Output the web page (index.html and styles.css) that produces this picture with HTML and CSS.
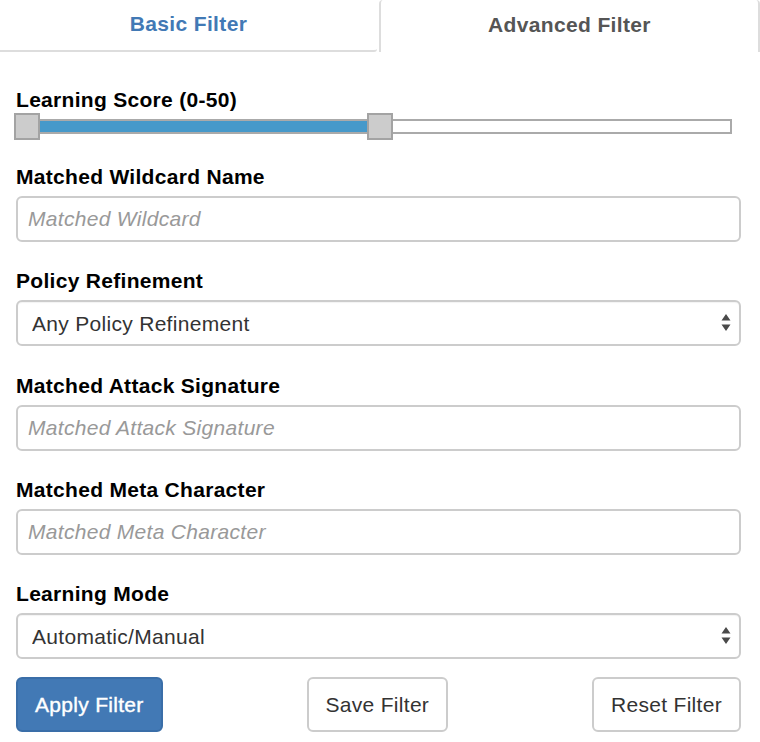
FILE: index.html
```html
<!DOCTYPE html>
<html>
<head>
<meta charset="utf-8">
<link rel="stylesheet" href="styles.css">
</head>
<body>
<div class="tabs">
  <div class="tab tab-basic">Basic Filter</div>
  <div class="tab tab-advanced">Advanced Filter</div>
</div>
<form class="panel">
  <div class="group group-slider">
    <label class="label">Learning Score (0-50)</label>
    <div class="slider">
      <div class="track">
        <div class="fill" style="left:22px;width:328px"></div>
        <div class="handle" style="left:-4px"></div>
        <div class="handle" style="left:349px"></div>
      </div>
    </div>
  </div>
  <div class="group">
    <label class="label">Matched Wildcard Name</label>
    <input class="control" type="text" placeholder="Matched Wildcard">
  </div>
  <div class="group group-wide">
    <label class="label">Policy Refinement</label>
    <div class="select-wrap">
      <select class="control select"><option>Any Policy Refinement</option></select>
      <svg class="arrows" width="10" height="17" viewBox="0 0 10 17"><path d="M5 0 L9.5 6.5 L0.5 6.5 Z M0.5 10.5 L9.5 10.5 L5 17 Z" fill="#4a4a4a"/></svg>
    </div>
  </div>
  <div class="group">
    <label class="label">Matched Attack Signature</label>
    <input class="control" type="text" placeholder="Matched Attack Signature">
  </div>
  <div class="group">
    <label class="label">Matched Meta Character</label>
    <input class="control" type="text" placeholder="Matched Meta Character">
  </div>
  <div class="group group-last">
    <label class="label">Learning Mode</label>
    <div class="select-wrap">
      <select class="control select"><option>Automatic/Manual</option></select>
      <svg class="arrows" width="10" height="17" viewBox="0 0 10 17"><path d="M5 0 L9.5 6.5 L0.5 6.5 Z M0.5 10.5 L9.5 10.5 L5 17 Z" fill="#4a4a4a"/></svg>
    </div>
  </div>
  <div class="buttons">
    <button type="button" class="btn btn-primary">Apply Filter</button>
    <button type="button" class="btn">Save Filter</button>
    <button type="button" class="btn">Reset Filter</button>
  </div>
</form>
</body>
</html>
```
FILE: styles.css
```css
* { box-sizing: border-box; }
html, body { margin: 0; padding: 0; background: #fff; }
body {
  font-family: "Liberation Sans", Arial, Helvetica, sans-serif;
  color: #000;
  width: 760px;
}
.tabs {
  display: flex;
  height: 52px;
}
.tab {
  flex: 1;
  display: flex;
  align-items: center;
  justify-content: center;
  font-weight: bold;
  font-size: 21px;
  letter-spacing: 0.35px;
  padding-bottom: 3px;
}
.tab-basic {
  color: #4279b5;
  border-bottom: 2px solid #dddddd;
  border-bottom-right-radius: 3px;
  margin-right: 2px;
}
.tab-advanced {
  color: #555555;
  border-left: 2px solid #dddddd;
  border-right: 2px solid #dddddd;
  border-top-left-radius: 4px;
  border-top-right-radius: 4px;
}
.panel {
  padding: 36px 19px 0 16px;
}
.group {
  display: flex;
  flex-direction: column;
  margin-bottom: 27px;
}
.group-wide { margin-bottom: 28px; }
.group-slider { margin-bottom: 25px; }
.group-last { margin-bottom: 18px; }
.label {
  font-weight: bold;
  font-size: 21px;
  letter-spacing: 0.3px;
  line-height: 24px;
  margin-bottom: 7px;
}
.group-slider .label { margin-bottom: 1px; }
.slider {
  height: 27px;
  display: flex;
  align-items: center;
  width: 716px;
}
.track {
  position: relative;
  width: 716px;
  height: 15px;
  border: 2px solid #aaaaaa;
  background: #fff;
}
.fill {
  position: absolute;
  top: 0;
  height: 11px;
  background: #4699ca;
}
.handle {
  position: absolute;
  top: -8px;
  width: 26px;
  height: 27px;
  background: #cccccc;
  border: 2px solid #a3a3a3;
}
.control {
  width: 725px;
  height: 46px;
  border: 2px solid #cccccc;
  border-radius: 6px;
  font-family: "Liberation Sans", Arial, Helvetica, sans-serif;
  font-size: 21px;
  letter-spacing: 0.3px;
  color: #333;
  padding: 0 10px;
  background: #fff;
  outline: none;
}
.control::placeholder {
  color: #999999;
  font-style: italic;
}
.select-wrap {
  position: relative;
  width: 725px;
}
.select {
  appearance: none;
  -webkit-appearance: none;
  padding-left: 14px;
  box-shadow: inset 0 1px 1px rgba(0,0,0,0.05);
}
.arrows {
  position: absolute;
  right: 10px;
  top: 14px;
  pointer-events: none;
}
.buttons {
  display: flex;
  justify-content: space-between;
  width: 725px;
}
.btn {
  height: 55px;
  padding: 0 17px;
  font-family: "Liberation Sans", Arial, Helvetica, sans-serif;
  font-size: 21px;
  letter-spacing: 0.3px;
  color: #333;
  background: #fff;
  border: 2px solid #cccccc;
  border-radius: 6px;
}
.btn-primary {
  background: #4279b5;
  border-color: #3a6ea8;
  color: #fff;
  -webkit-text-stroke: 0.4px #fff;
}
```
